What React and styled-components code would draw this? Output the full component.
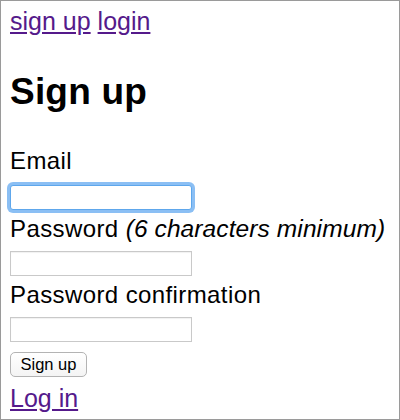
import React from "react";
import styled, { createGlobalStyle } from "styled-components";

const Global = createGlobalStyle`
  html, body { margin: 0; padding: 0; background: #fff; }
  body { font-family: "Liberation Sans", Arial, Helvetica, sans-serif; color: #000; }
  * { box-sizing: border-box; }
`;

const Frame = styled.div`
  width: 400px;
  height: 420px;
  border: 1px solid #9a9a9a;
  padding: 0 8px 0 9px;
  overflow: hidden;
`;

const Nav = styled.nav`
  font-size: 25px;
  line-height: 25px;
  padding-top: 8px;
`;

const Link = styled.a`
  color: #551a8b;
  text-decoration: underline;
  font-size: 25px;
`;

const Title = styled.h1`
  font-size: 37px;
  line-height: 40px;
  font-weight: bold;
  margin: 38px 0 31px;
  letter-spacing: 0.2px;
`;

const Form = styled.form`
  display: flex;
  flex-direction: column;
  align-items: flex-start;
`;

const Label = styled.label`
  display: block;
  font-size: 24px;
  letter-spacing: 0.4px;
  line-height: 36px;
  margin-top: ${(p) => p.$mt ?? 1}px;
  margin-bottom: ${(p) => p.$mb ?? 4}px;
`;

const Note = styled.em`
  font-style: italic;
  font-size: 24.5px;
  letter-spacing: 0.1px;
`;

const Input = styled.input`
  display: block;
  width: 182px;
  height: 25px;
  margin: 0;
  padding: 1px 3px;
  border: 1px solid ${(p) => (p.$focus ? "#5ea7ec" : "#c9c9c9")};
  border-radius: ${(p) => (p.$focus ? "3px" : "0")};
  background: #fff;
  box-shadow: ${(p) =>
    p.$focus ? "0 0 0 3px rgba(100, 170, 240, 0.75)" : "inset 0 1px 1px rgba(0,0,0,0.06)"};
  outline: none;
  font-size: 14px;
`;

const Button = styled.button`
  margin-top: 10px;
  width: 77px;
  height: 25px;
  padding: 0;
  font-family: "Liberation Sans", Arial, sans-serif;
  font-size: 16.5px;
  color: #000;
  background: linear-gradient(#ffffff, #f4f4f4);
  border: 1px solid #b3b3b3;
  border-radius: 5px;
`;

const Footer = styled.div`
  margin-top: 7px;
  line-height: 29px;
`;

export default function App() {
  return (
    <>
      <Global />
      <Frame>
        <Nav>
          <Link href="#">sign up</Link> <Link href="#">login</Link>
        </Nav>
        <Title>Sign up</Title>
        <Form onSubmit={(e) => e.preventDefault()}>
          <Label htmlFor="email" $mt={0} $mb={6}>Email</Label>
          <Input id="email" type="email" $focus />
          <Label htmlFor="pw">
            Password <Note>(6 characters minimum)</Note>
          </Label>
          <Input id="pw" type="password" />
          <Label htmlFor="pwc">Password confirmation</Label>
          <Input id="pwc" type="password" />
          <Button type="submit">Sign up</Button>
        </Form>
        <Footer>
          <Link href="#">Log in</Link>
        </Footer>
      </Frame>
    </>
  );
}
